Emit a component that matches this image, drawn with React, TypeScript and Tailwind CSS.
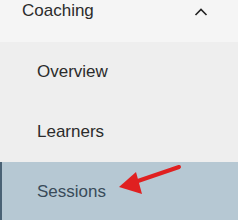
const ITEMS = [
  { label: "Overview", active: false },
  { label: "Learners", active: false },
  { label: "Sessions", active: true },
];

export default function App() {
  return (
    <div className="w-[238px] h-[220px] overflow-hidden bg-[#eeeeee] font-['Liberation_Sans',Arial,sans-serif]">
      {/* Section header */}
      <div className="h-[42px] bg-[#f5f5f5] flex items-start justify-between pl-[22px] pr-[30px] pt-[1px]">
        <span className="text-[17px] leading-[20px] text-[#2b2b2b]">Coaching</span>
        <svg width="14" height="10" viewBox="0 0 14 10" className="mt-[6px]">
          <polyline points="1.5,8 7,2.5 12.5,8" fill="none" stroke="#222" strokeWidth="1.6" />
        </svg>
      </div>

      {/* Nav items */}
      <div className="flex flex-col">
        {ITEMS.map((item) => (
          <div
            key={item.label}
            className={
              item.active
                ? "relative h-[60px] flex items-center pl-[35px] bg-[#b6c8d3] border-l-2 border-[#4a6275] text-[#394b59]"
                : "h-[60px] flex items-center pl-[37px] text-[#2b2b2b]"
            }
          >
            <span className="text-[17px] leading-[20px]">{item.label}</span>
            {item.active && (
              <svg
                className="absolute left-[-2px] top-0"
                width="238"
                height="60"
                viewBox="0 0 238 60"
              >
                <line x1="179" y1="5" x2="132" y2="21" stroke="#e02020" strokeWidth="4" strokeLinecap="round" />
                <polygon points="119,25 136,10 142,32" fill="#e02020" />
              </svg>
            )}
          </div>
        ))}
      </div>
    </div>
  );
}
